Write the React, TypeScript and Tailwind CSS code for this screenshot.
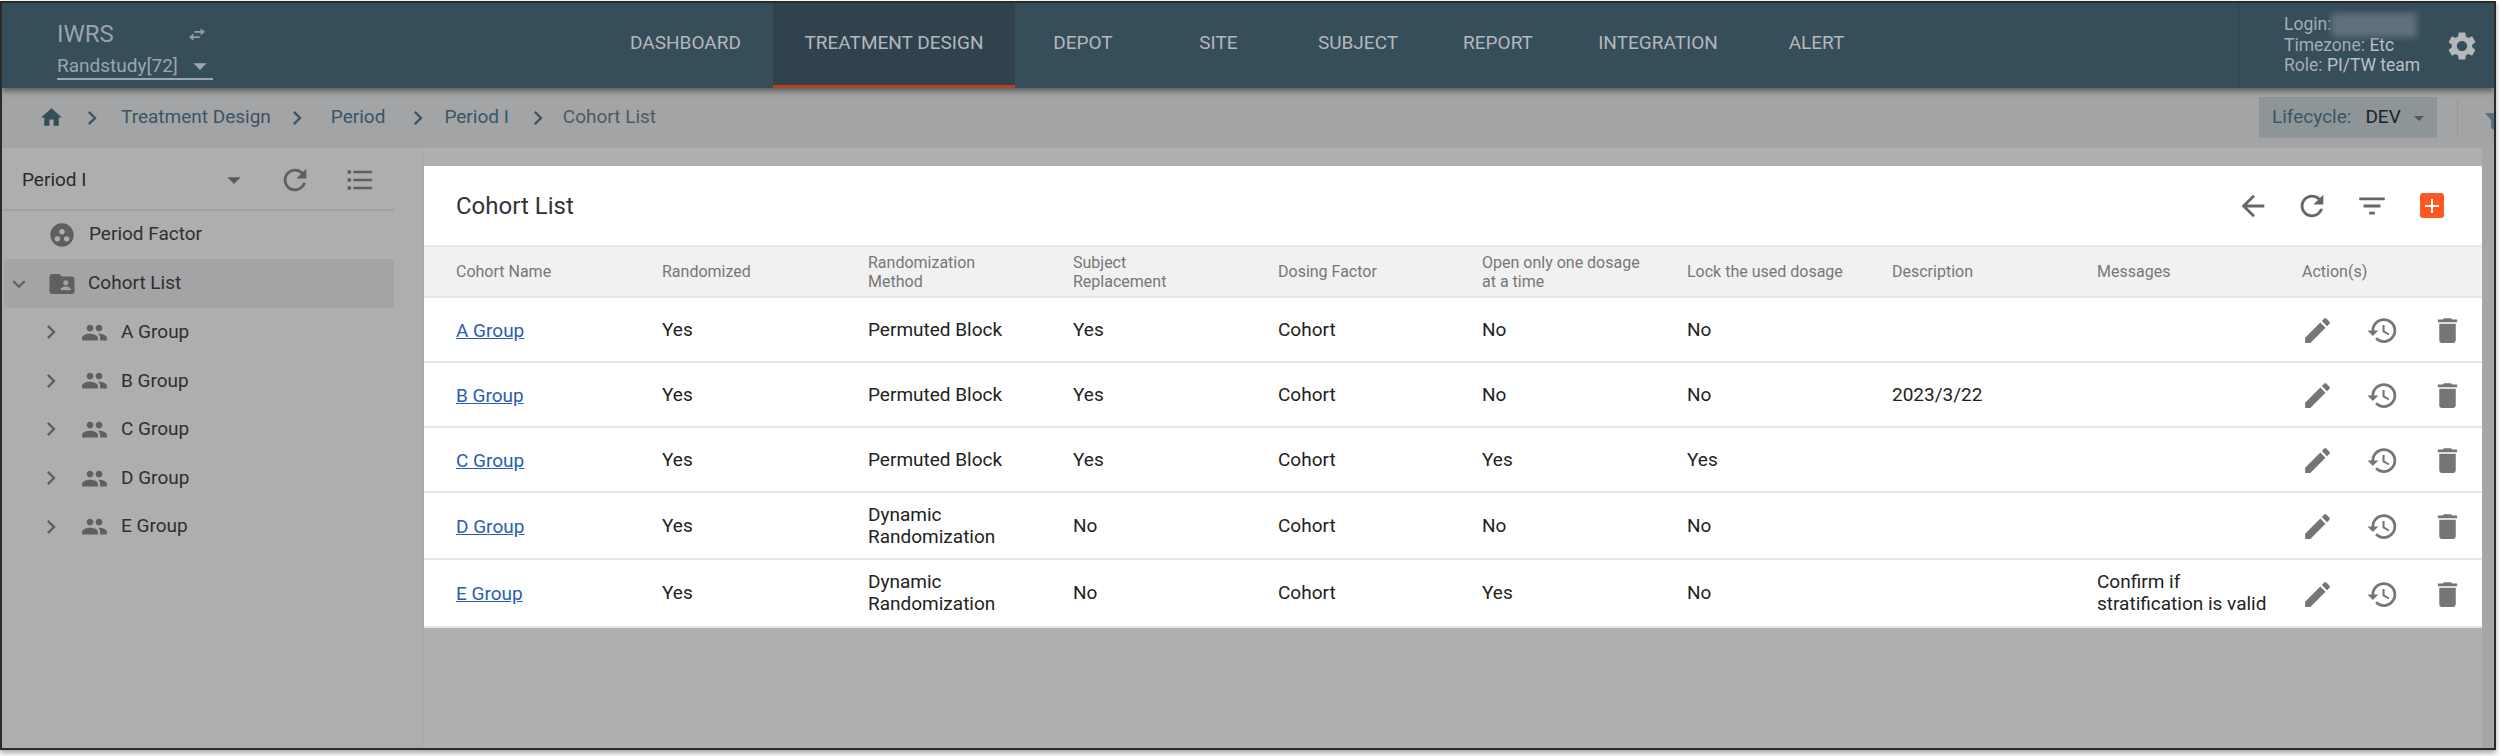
import { MdHome, MdChevronRight, MdExpandMore, MdRefresh, MdFormatListBulleted, MdPeople, MdFolderShared, MdEdit, MdHistory, MdDelete, MdFilterList, MdArrowBack, MdSettings, MdArrowDropDown, MdAdd } from "react-icons/md";

const navItems = [
  { label: "DEPOT", w: "w-[136px]" },
  { label: "SITE", w: "w-[135px]" },
  { label: "SUBJECT", w: "w-[144px]" },
  { label: "REPORT", w: "w-[136px]" },
  { label: "INTEGRATION", w: "w-[184px]" },
  { label: "ALERT", w: "w-[133px]" },
];

const headers = ["Cohort Name", "Randomized", "Randomization\nMethod", "Subject\nReplacement", "Dosing Factor", "Open only one dosage\nat a time", "Lock the used dosage", "Description", "Messages", "Action(s)"];

const rows = [
  { h: "h-[65px]", name: "A Group", method: "Permuted Block", sub: "Yes", open: "No", lock: "No", desc: "", msg: "" },
  { h: "h-[65px]", name: "B Group", method: "Permuted Block", sub: "Yes", open: "No", lock: "No", desc: "2023/3/22", msg: "" },
  { h: "h-[65px]", name: "C Group", method: "Permuted Block", sub: "Yes", open: "Yes", lock: "Yes", desc: "", msg: "" },
  { h: "h-[67px]", name: "D Group", method: "Dynamic\nRandomization", sub: "No", open: "No", lock: "No", desc: "", msg: "" },
  { h: "h-[68px]", name: "E Group", method: "Dynamic\nRandomization", sub: "No", open: "Yes", lock: "No", desc: "", msg: "Confirm if\nstratification is valid" },
];

const cols = "grid grid-cols-[206px_206px_205px_205px_204px_205px_205px_205px_205px_179px] items-center pl-8";

function FactorIcon() {
  return (
    <svg viewBox="0 0 24 24" className="w-[28px] h-[28px] text-[#5f5f5f]" fill="currentColor">
      <path fillRule="evenodd" d="M12 2a10 10 0 1 0 0 20 10 10 0 0 0 0-20Zm0 4.9a2.3 2.3 0 1 1 0 4.6 2.3 2.3 0 0 1 0-4.6Zm-4 6.1a2.3 2.3 0 1 1 0 4.6 2.3 2.3 0 0 1 0-4.6Zm8 0a2.3 2.3 0 1 1 0 4.6 2.3 2.3 0 0 1 0-4.6Z" />
    </svg>
  );
}

function SwapIcon() {
  return (
    <svg viewBox="0 0 20 14" className="w-[18px] h-[13px] text-[#8f9ca4]" fill="currentColor">
      <path d="M14 0v3H7v2h7v3l5-4zM6 6l-5 4 5 4v-3h7V9H6z" />
    </svg>
  );
}

export default function App() {
  return (
    <div className="w-[2500px] h-[756px] bg-white font-['Roboto',sans-serif] overflow-hidden">
      <div className="mt-px w-[2496px] h-[749px] border-2 border-[#2a2a2a] shadow-[0_3px_5px_rgba(0,0,0,0.35)] flex flex-col bg-[#afafaf] overflow-hidden">
        {/* Header */}
        <header className="relative z-10 h-[85px] shrink-0 bg-[#364d5a] flex shadow-[0_3px_6px_rgba(0,0,0,0.45)]">
          <div className="w-[596px] pl-[55px] pt-[14px] shrink-0">
            <div className="flex items-center h-[34px] text-[24px] text-[#98a4ab]">
              <span className="w-[131px]">IWRS</span>
              <SwapIcon />
            </div>
            <div className="mt-[3px] w-[156px] h-[26px] flex items-center justify-between border-b-2 border-[#9aa5ac] text-[19px] text-[#9aa5ac]">
              <span>Randstudy[72]</span>
              <MdArrowDropDown className="w-[32px] h-[32px] -mr-[3px]" />
            </div>
          </div>
          <nav className="flex text-[19px] text-[#b4b8bb]">
            <a className="w-[175px] flex items-center justify-center pb-[4px]">DASHBOARD</a>
            <a className="w-[242px] flex items-center justify-center pb-[1px] bg-[#2f424e] border-b-[3px] border-[#b8431c]">TREATMENT DESIGN</a>
            {navItems.map(n => (
              <a key={n.label} className={`${n.w} flex items-center justify-center pb-[4px]`}>{n.label}</a>
            ))}
          </nav>
          <div className="flex-1" />
          <div className="relative w-[256px] shrink-0 border-l border-[#2f424e] pl-[45px] pt-[11px] text-[17.5px] leading-[20.5px] text-[#a3adb3]">
            <div>Login:</div>
            <div>Timezone: <span className="text-[#bcc0c3]">Etc</span></div>
            <div>Role: <span className="text-[#bcc0c3]">PI/TW team</span></div>
            <div className="absolute left-[92px] top-[10px] w-[86px] h-[24px] bg-[#5f717b] blur-[3px]" />
            <MdSettings className="absolute left-[206px] top-[26px] w-[34px] h-[34px] text-[#b4b8bb]" />
          </div>
        </header>

        {/* Breadcrumb */}
        <div className="h-[60px] shrink-0 bg-[#a3a4a6] flex items-center text-[19px] text-[#3a5565] pb-[1px]">
          <MdHome className="ml-[37px] w-[25px] h-[25px] text-[#364d5a]" />
          <MdChevronRight className="ml-[14px] w-[28px] h-[28px] text-[#3a5565]" />
          <span className="ml-[15px]">Treatment Design</span>
          <MdChevronRight className="ml-[12px] w-[28px] h-[28px]" />
          <span className="ml-[20px]">Period</span>
          <MdChevronRight className="ml-[19px] w-[28px] h-[28px]" />
          <span className="ml-[12px]">Period I</span>
          <MdChevronRight className="ml-[15px] w-[28px] h-[28px]" />
          <span className="ml-[11px] text-[#51585c]">Cohort List</span>
          <div className="flex-1" />
          <div className="h-[41px] w-[178px] bg-[#8e9599] flex items-center pl-[13px]">
            <span>Lifecycle:</span>
            <span className="ml-[14px] text-[#1e2224]">DEV</span>
            <MdArrowDropDown className="ml-[6px] w-[24px] h-[24px] text-[#505a60]" />
          </div>
          <div className="ml-[20px] w-px h-[38px] bg-[#949698]" />
          <svg viewBox="0 0 9 17" className="ml-[27px] mt-[8px] w-[9px] h-[17px] text-[#5b7080]" fill="currentColor">
            <path d="M0 0H9V17L6 15V7Z" />
          </svg>
        </div>

        {/* Body */}
        <div className="flex flex-1 min-h-0">
          <aside className="w-[422px] shrink-0 bg-[#aeaeae] pr-[30px] shadow-[inset_-3px_0_3px_-3px_rgba(0,0,0,0.08)]">
            <div className="h-[63px] flex items-center border-b-2 border-[#a0a0a0] text-[19px] text-[#2a2a2a] pl-[20px] pt-[3px]">
              <span className="w-[196px]">Period I</span>
              <MdArrowDropDown className="w-[32px] h-[32px] text-[#5a5a5a]" />
              <MdRefresh className="ml-[28px] w-[34px] h-[34px] text-[#5f5f5f]" />
              <MdFormatListBulleted className="ml-[32px] w-[32px] h-[32px] text-[#5f5f5f]" />
            </div>
            <div className="h-[48px] flex items-center pl-[46px] pb-[1px] text-[19px] text-[#2f2f2f]">
              <FactorIcon />
              <span className="ml-[13px]">Period Factor</span>
            </div>
            <div className="h-[49px] ml-[2px] flex items-center bg-[#a3a4a6] text-[19px] text-[#2f2f2f]">
              <MdExpandMore className="ml-[2px] w-[26px] h-[26px] text-[#5f5f5f]" />
              <MdFolderShared className="ml-[15px] w-[30px] h-[30px] text-[#5f5f5f]" />
              <span className="ml-[11px]">Cohort List</span>
            </div>
            {rows.map(r => (
              <div key={r.name} className="h-[48.6px] flex items-center pl-[35px] text-[19px] text-[#2f2f2f]">
                <MdChevronRight className="w-[28px] h-[28px] text-[#5f5f5f]" />
                <MdPeople className="ml-[16px] w-[27px] h-[27px] text-[#5f5f5f]" />
                <span className="ml-[13px]">{r.name}</span>
              </div>
            ))}
          </aside>

          <main className="flex-1 flex">
            <div className="flex-1 pt-[18px]">
              <section className="bg-white">
                <div className="h-[81px] flex items-center pl-8 border-b-2 border-[#e8e8e8]">
                  <h1 className="text-[24px] text-[#333] flex-1">Cohort List</h1>
                  <MdArrowBack className="w-[34px] h-[34px] text-[#666]" />
                  <MdRefresh className="ml-[25px] w-[34px] h-[34px] text-[#666]" />
                  <MdFilterList className="ml-[26px] w-[34px] h-[34px] text-[#666]" />
                  <div className="ml-[31px] mr-[38px] w-[24px] h-[25px] rounded-[3px] bg-[#ff5722] flex items-center justify-center">
                    <MdAdd className="w-[24px] h-[24px] text-white" />
                  </div>
                </div>
                <div className={`${cols} h-[51px] bg-[#f1f1f1] text-[16px] leading-[19px] text-[#777] border-b-2 border-[#e4e4e4]`}>
                  {headers.map(h => <div key={h} className="whitespace-pre-line">{h}</div>)}
                </div>
                {rows.map(r => (
                  <div key={r.name} className={`${cols} ${r.h} text-[19px] leading-[22px] text-[#222] border-b-2 border-[#e6e6e6]`}>
                    <a className="text-[#2a5db0] underline pt-[2px]">{r.name}</a>
                    <div>Yes</div>
                    <div className="whitespace-pre-line">{r.method}</div>
                    <div>{r.sub}</div>
                    <div>Cohort</div>
                    <div>{r.open}</div>
                    <div>{r.lock}</div>
                    <div>{r.desc}</div>
                    <div className="whitespace-pre-line">{r.msg}</div>
                    <div className="flex items-center gap-[32px] -ml-[1px] pt-[2px] text-[#757575]">
                      <MdEdit className="w-[33px] h-[33px]" />
                      <MdHistory className="w-[33px] h-[33px]" />
                      <MdDelete className="w-[33px] h-[33px]" />
                    </div>
                  </div>
                ))}
              </section>
            </div>
            <div className="w-[12px] shrink-0 bg-[#a6a6a6]" />
          </main>
        </div>
      </div>
    </div>
  );
}
